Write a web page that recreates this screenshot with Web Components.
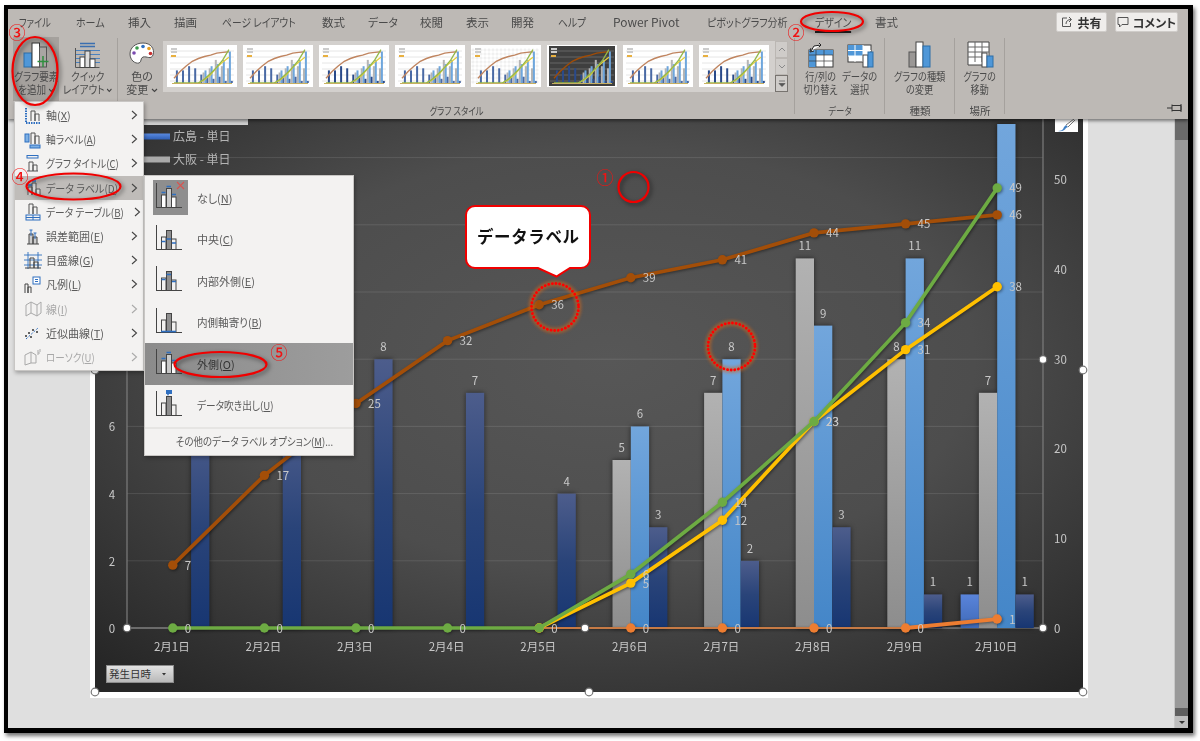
<!DOCTYPE html>
<html lang="ja"><head><meta charset="utf-8"><title>グラフ データラベル</title>
<style>html,body{margin:0;padding:0;background:#fff;overflow:hidden}body{font-family:"Noto Sans CJK JP","Noto Sans",sans-serif}</style>
</head><body>
<app-window>
  <ribbon-bar slot="ribbon">
    <ribbon-tab slot="tabs" style="width:57px;--sx:.8">ファイル</ribbon-tab>
    <ribbon-tab slot="tabs" style="width:52px;--sx:.87">ホーム</ribbon-tab>
    <ribbon-tab slot="tabs" style="width:46px">挿入</ribbon-tab>
    <ribbon-tab slot="tabs" style="width:48px">描画</ribbon-tab>
    <ribbon-tab slot="tabs" style="width:100px;--sx:.85">ページ レイアウト</ribbon-tab>
    <ribbon-tab slot="tabs" style="width:46px">数式</ribbon-tab>
    <ribbon-tab slot="tabs" style="width:52px;--sx:.93">データ</ribbon-tab>
    <ribbon-tab slot="tabs" style="width:46px">校閲</ribbon-tab>
    <ribbon-tab slot="tabs" style="width:45px">表示</ribbon-tab>
    <ribbon-tab slot="tabs" style="width:47px">開発</ribbon-tab>
    <ribbon-tab slot="tabs" style="width:55px;--sx:.85">ヘルプ</ribbon-tab>
    <ribbon-tab slot="tabs" style="width:94px;--sx:1.04">Power Pivot</ribbon-tab>
    <ribbon-tab slot="tabs" style="width:108px;--sx:.87">ピボットグラフ分析</ribbon-tab>
    <ribbon-tab slot="tabs" style="width:60px;--sx:.86" active>デザイン</ribbon-tab>
    <ribbon-tab slot="tabs" style="width:40px">書式</ribbon-tab>
    <share-button slot="actions" kind="share">共有</share-button>
    <share-button slot="actions" kind="comment">コメント</share-button>

    <ribbon-group style="width:110px;padding-left:5px">
      <ribbon-button active style="width:46px;--bx:.87">
        <svg slot="icon" width="26" height="26" viewBox="0 0 26 26"><rect x="1" y="11" width="8" height="14" fill="#4f97d8" stroke="#2d6ea8"/><rect x="9" y="1" width="7.500" height="24" fill="#fff" stroke="#333"/><rect x="16.500" y="5" width="7" height="20" fill="#a9a6a3" stroke="#555"/><path d="M20 14v11M14.500 19.500h11" stroke="#2f8f3f" stroke-width="1.500"/></svg>
        グラフ要素<br>を追加 <chev-mark></chev-mark>
      </ribbon-button>
      <ribbon-button style="width:55px;margin-left:1px;--bx:.87">
        <svg slot="icon" width="27" height="26" viewBox="0 0 27 26"><path d="M6 1.500h15M6 4.500h15" stroke="#3b6fb0" stroke-width="1.500"/><path d="M1 8.500h25M1 12.500h25M1 16.500h25M1 20.500h25" stroke="#4a82c0"/><path d="M1.500 6v19.500h24" fill="none" stroke="#555"/><rect x="6" y="15" width="5" height="10.500" fill="#fff" stroke="#444"/><rect x="11" y="9" width="5" height="16.500" fill="#ddd" stroke="#444"/><rect x="16" y="17" width="5" height="8.500" fill="#fff" stroke="#444"/></svg>
        クイック<br>レイアウト <chev-mark></chev-mark>
      </ribbon-button>
    </ribbon-group>

    <ribbon-group label="グラフ スタイル" style="width:677px;padding-left:6px;--sx:.8">
      <ribbon-button style="width:36px">
        <svg slot="icon" width="26" height="25" viewBox="0 0 26 25"><path d="M14 1C6 1 1 6 1 12c0 6 5 10 9 9 3-1 1-5 4-6 4-1 8 3 10-2 2-6-2-12-10-12z" fill="#fff" stroke="#555"/><circle cx="8" cy="6" r="1.800" fill="#3a9a4a"/><circle cx="14" cy="4.500" r="1.800" fill="#2e6fc0"/><circle cx="20" cy="6.500" r="1.800" fill="#e8a020"/><circle cx="21.500" cy="11.500" r="1.800" fill="#c83030"/><circle cx="5" cy="11" r="1.800" fill="#7a4ab0"/></svg>
        色の<br>変更 <chev-mark></chev-mark>
      </ribbon-button>
      <style-gallery style="margin-left:3px">
        <chart-thumb></chart-thumb><chart-thumb></chart-thumb><chart-thumb pattern="strong"></chart-thumb><chart-thumb></chart-thumb>
        <chart-thumb pattern="dots"></chart-thumb><chart-thumb pattern="dark"></chart-thumb><chart-thumb></chart-thumb><chart-thumb pattern="strong"></chart-thumb>
      </style-gallery>
    </ribbon-group>

    <ribbon-group label="データ" style="width:90px;padding-left:8px;--sx:.8">
      <ribbon-button style="width:36px;--bx:.83">
        <svg slot="icon" width="26" height="26" viewBox="0 0 26 26"><rect x="1" y="8" width="24" height="17" fill="#fff" stroke="#3a3a3a"/><path d="M1 8h24v5H1zM1 13h7v12H1z" fill="#4f97d8"/><path d="M1 13h24M1 19h24M8 8v17M16 8v17" stroke="#3a3a3a" stroke-width=".7"/><path d="M3 9l3-5 7-1M11 1l2 2-2 2M3 6l-1 4 4-1" fill="#fff" stroke="#222"/></svg>
        行/列の<br>切り替え
      </ribbon-button>
      <ribbon-button style="width:38px;margin-left:2px;--bx:.85">
        <svg slot="icon" width="27" height="26" viewBox="0 0 27 26"><rect x="1" y="3" width="23" height="17" fill="#fff" stroke="#3a3a3a"/><path d="M1 3h15v11H1z" fill="#4f97d8"/><path d="M1 8.500h23M1 14h23M8 3v17M16 3v17" stroke="#fff"/><rect x="16" y="13" width="5" height="12" fill="#fff" stroke="#444"/><rect x="21" y="10" width="5" height="15" fill="#4f97d8" stroke="#2d6ea8"/></svg>
        データの<br>選択
      </ribbon-button>
    </ribbon-group>

    <ribbon-group label="種類" style="width:70px">
      <ribbon-button style="width:70px;--bx:.84">
        <svg slot="icon" width="24" height="27" viewBox="0 0 24 27"><rect x="1" y="11" width="7" height="15" fill="#9a9795" stroke="#555"/><rect x="8" y="1" width="7" height="25" fill="#fff" stroke="#444"/><rect x="15" y="5" width="7" height="21" fill="#4f97d8" stroke="#2d6ea8"/></svg>
        グラフの種類<br>の変更
      </ribbon-button>
    </ribbon-group>

    <ribbon-group label="場所" style="width:50px">
      <ribbon-button style="width:50px;--bx:.82">
        <svg slot="icon" width="27" height="27" viewBox="0 0 27 27"><path d="M1 1h21v18l-5 5H1z" fill="#fff" stroke="#444"/><path d="M1 6h21M1 11h21M1 16h21M8 1v20M15 1v20" stroke="#666"/><rect x="15" y="12" width="5" height="14" fill="#fff" stroke="#444"/><rect x="20" y="15" width="6" height="11" fill="#4f97d8" stroke="#2d6ea8"/></svg>
        グラフの<br>移動
      </ribbon-button>
    </ribbon-group>
    <svg slot="pin" width="16" height="10" viewBox="0 0 16 10"><path d="M0 5h5M5 1.500v7M5 2.500h9v5H5" fill="none" stroke="#333"/><path d="M14 1v8" stroke="#333"/></svg>
  </ribbon-bar>

  <work-area slot="work">
    <pivot-chart></pivot-chart>
    <field-button>発生日時</field-button>
  </work-area>

  <fly-menu slot="menus" style="left:14px;top:101px;width:130px">
    <menu-row icon="axis" arrow>軸(<u>X</u>)</menu-row>
    <menu-row icon="axisLabel" arrow style="--sx:.89">軸ラベル(<u>A</u>)</menu-row>
    <menu-row icon="title" arrow style="--sx:.87">グラフ タイトル(<u>C</u>)</menu-row>
    <menu-row icon="dataLabel" arrow on style="--sx:.91">データ ラベル(<u>D</u>)</menu-row>
    <menu-row icon="table" arrow style="--sx:.885">データ テーブル(<u>B</u>)</menu-row>
    <menu-row icon="error" arrow>誤差範囲(<u>E</u>)</menu-row>
    <menu-row icon="grid" arrow>目盛線(<u>G</u>)</menu-row>
    <menu-row icon="legend" arrow>凡例(<u>L</u>)</menu-row>
    <menu-row icon="line" arrow off>線(<u>I</u>)</menu-row>
    <menu-row icon="trend" arrow>近似曲線(<u>T</u>)</menu-row>
    <menu-row icon="stock" arrow off style="--sx:.87">ローソク(<u>U</u>)</menu-row>
  </fly-menu>

  <fly-menu slot="menus" style="left:144px;top:175px;width:210px">
    <label-row kind="none">なし(<u>N</u>)</label-row>
    <label-row kind="center">中央(<u>C</u>)</label-row>
    <label-row kind="inEnd">内部外側(<u>E</u>)</label-row>
    <label-row kind="inBase" style="--sx:.96">内側軸寄り(<u>B</u>)</label-row>
    <label-row kind="outside" on>外側(<u>O</u>)</label-row>
    <label-row kind="callout" style="--sx:.88">データ吹き出し(<u>U</u>)</label-row>
    <more-row>その他のデータ ラベル オプション(<u>M</u>)...</more-row>
  </fly-menu>

  <note-layer slot="menus"></note-layer>
</app-window>

<script>
const FONT='"Noto Sans CJK JP","Noto Sans",sans-serif';
function el(name,css,html){
  class C extends HTMLElement{
    constructor(){super();this.attachShadow({mode:'open'}).innerHTML='<style>'+css+'</style>'+(typeof html==='function'?html(this):html);}
  }
  customElements.define(name,C);
}

el('app-window',`
:host{display:block;position:relative;width:1200px;height:741px;overflow:hidden;font-family:${FONT};font-feature-settings:"palt"}
.wrap{filter:blur(.35px);width:1200px;height:741px}
.frame{box-sizing:border-box;margin:0 0 0 4px;position:relative;top:5px;width:1189px;height:728px;border:solid #000;border-width:4px 5px 5px 4px;display:flex;flex-direction:column;background:#dfdfdf;box-shadow:2px 3px 4px rgba(0,0,0,.55);overflow:hidden}
`,`<div class="wrap"><div class="frame"><slot name="ribbon"></slot><slot name="work"></slot></div><slot name="menus"></slot></div>`);

el('ribbon-bar',`
:host{display:block;position:relative;z-index:3;background:#bdb9b5;height:110px;flex:none;box-shadow:0 2px 3px rgba(0,0,0,.45);color:#4b4b4b;font-size:11px}
.top{display:flex;height:27px;align-items:center;padding-left:11px}
.tabs{display:flex;flex:1}
.acts{display:flex;gap:8px;margin-right:10px;margin-top:-1px}
.groups{display:flex;height:83px}
.pin{position:absolute;right:5px;bottom:3px}
`,`<div class="top"><div class="tabs"><slot name="tabs"></slot></div><div class="acts"><slot name="actions"></slot></div></div>
<div class="groups"><slot></slot></div><div class="pin"><slot name="pin"></slot></div>`);

el('ribbon-tab',`
:host{display:block;flex:none;position:relative;font-size:11.5px;line-height:27px;height:27px;white-space:nowrap;color:#4a4a4a}
span{display:inline-block;transform:scaleX(var(--sx,1));transform-origin:left center}
:host([active]) span{border-bottom:2px solid #222;height:22px}
`,`<span><slot></slot></span>`);

el('share-button',`
:host{display:flex;align-items:center;justify-content:center;gap:4px;box-sizing:border-box;height:20px;background:#efedeb;border:1px solid #cfccc9;border-radius:2px;font-size:12px;font-weight:700;color:#333;white-space:nowrap}
:host([kind=share]){width:51px}:host([kind=comment]){width:63px}
`,h=>(h.getAttribute('kind')==='share'
?`<svg width="12" height="12" viewBox="0 0 12 12"><path d="M6 2H1.500v8.500h8V7M5 8c0-3 2-4.500 5-4.500M8 1l2.500 2.500L8 6" fill="none" stroke="#555"/></svg>`
:`<svg width="12" height="12" viewBox="0 0 12 12"><path d="M1 1.500h10v7H5l-2.500 2.500V8.500H1z" fill="none" stroke="#555"/></svg>`)+`<slot></slot>`);

el('ribbon-group',`
:host{display:flex;flex:none;box-sizing:border-box;position:relative;height:81px;margin-top:0;padding-top:1px}
:host::after{content:"";position:absolute;right:0;top:2px;bottom:3px;width:1px;background:#a5a19d}
.lab{position:absolute;left:0;right:0;bottom:-1px;text-align:center;font-size:10.500px;line-height:14px;color:#4b4b4b;transform:scaleX(var(--sx,1))}
`,h=>`<slot></slot><div class="lab">${h.getAttribute('label')||''}</div>`);

el('ribbon-button',`
:host{display:flex;flex:none;flex-direction:column;align-items:center;box-sizing:border-box;height:64px;font-size:11px;line-height:13px;text-align:center;color:#4b4b4b;white-space:nowrap}
:host([active]){background:#a5a19d}
.ic{height:33px;display:flex;align-items:center;justify-content:center;padding-top:2px;box-sizing:border-box}
.lb{transform:scaleX(var(--bx,1))}
`,`<div class="ic"><slot name="icon"></slot></div><div class="lb"><slot></slot></div>`);

el('chev-mark',`:host{display:inline-block;width:7px;height:5px;vertical-align:1px}`,`<svg width="7" height="5" viewBox="0 0 7 5" style="display:block"><path d="M1 1l2.500 2.500L6 1" fill="none" stroke="#444" stroke-width="1.100"/></svg>`);

el('style-gallery',`
:host{display:flex;align-self:flex-start;margin-top:4px;width:624px;height:51px;background:#d3d0cd;box-sizing:border-box;padding:4px 0 0 4px;gap:6px}
.thumbs{display:flex;gap:6px;flex:1}
.sc{display:flex;flex-direction:column;width:13px;margin:-4px 0 0 0;flex:none}
.sc div{flex:1;border:1px solid #bbb7b3;background:#cfccc9;display:flex;align-items:center;justify-content:center}
.sc div:last-child{border-color:#77736f}
`,`<div class="thumbs"><slot></slot></div><div class="sc"><div><svg width="8" height="5"><path d="M1 4l3-3 3 3" fill="none" stroke="#8a8a8a"/></svg></div><div><svg width="8" height="5"><path d="M1 1l3 3 3-3" fill="none" stroke="#8a8a8a"/></svg></div><div><svg width="8" height="7"><path d="M1 1h6M1 3.500h6l-3 3z" fill="#555" stroke="#555" stroke-width=".7"/></svg></div></div>`);

el('chart-thumb',`:host{display:block;width:70px;height:42px;flex:none}svg{display:block}`,h=>{
  const p=h.getAttribute('pattern')||'';const dark=p==='dark';
  const X=i=>7+i*6.1,Y=v=>38-v*.68,D=[6,6,8,7,4,3,2,3,1,1],G=[0,0,0,0,0,5,7,11,8,7],L=[0,0,0,0,0,6,8,9,11,15];
  const sc=2.1;let s='';
  for(let i=0;i<10;i++){
    if(G[i])s+=`<rect x="${X(i)-1.9}" y="${38-G[i]*sc}" width="2" height="${G[i]*sc}" fill="#b5b5b5"/>`;
    if(L[i])s+=`<rect x="${X(i)}" y="${38-L[i]*sc}" width="2" height="${L[i]*sc}" fill="#6ea6dc"/>`;
    s+=`<rect x="${X(i)+1.9}" y="${38-D[i]*sc}" width="2" height="${D[i]*sc}" fill="${p==='strong'||dark?'#2a4a8a':'#4a6aa5'}"/>`;
  }
  const pl=(a,c,w)=>`<polyline fill="none" stroke="${c}" stroke-width="${w}" points="${a.map(q=>X(q[0])+','+Y(q[1])).join(' ')}"/>`;
  const br=[7,17,25,32,36,39,41,44,45,46].map((v,i)=>[i,v]);
  const gr=[0,0,0,0,0,6,14,23,34,49].map((v,i)=>[i,v]);
  const ye=[0,5,12,23,31,38].map((v,i)=>[i+4,v]);
  let bg='';
  if(p==='dots'){for(let y=5;y<38;y+=4)for(let x=2;x<70;x+=4)bg+=`<circle cx="${x}" cy="${y}" r="1.100" fill="none" stroke="#d5d5d5" stroke-width=".4"/>`;}
  else{for(let y=6;y<38;y+=6)bg+=`<path d="M3 ${y}h64" stroke="${dark?'#666':'#e6e6e6'}"/>`;}
  return `<svg width="70" height="42" viewBox="0 0 70 42"><rect width="70" height="42" fill="#fff"/>${dark?'<rect x="2" y="1" width="66" height="40" fill="#3f3f3f"/>':''}${bg}
  <rect x="4" y="3" width="6" height="2" fill="#ccc"/><rect x="4" y="6" width="6" height="2" fill="#ccc"/><rect x="4" y="10" width="5" height="2" fill="#e8b040"/>
  ${s}${pl(br,dark?'#a04c06':'#c08560',1.400)}${pl(ye,'#e5cf3a',1.300)}${pl(gr,'#94b84a',1.300)}<path d="M5 38.500h60" stroke="#c8b060"/></svg>`;
});

el('work-area',`
:host{display:flex;flex:1;position:relative;min-height:0}
.main{flex:1;min-width:0;padding-left:82px;position:relative}
.card{position:relative;box-sizing:border-box;width:998px;height:579px;background:#fff;padding:0 5px 6px 5px}
.sb{width:14px;flex:none;display:flex;flex-direction:column;background:#6a6a6a;border-left:1px solid #c8c8c8;box-sizing:border-box}
.sb .t{height:21px}.sb .th{flex:1;background:#999}.sb .g{height:8px;background:#5f5f5f}
.sb .b{height:12px;background:#bdbdbd;display:flex;align-items:center;justify-content:center}
`,`<div class="main"><div class="card"><slot></slot></div></div><div class="sb"><div class="t"></div><div class="th"></div><div class="g"></div><div class="b"><svg width="8" height="5"><path d="M1 1h6L4 4z" fill="#333"/></svg></div></div>`);

el('field-button',`
:host{position:absolute;left:16px;top:546px;box-sizing:border-box;width:68px;height:18px;background:linear-gradient(#e2e2e2,#b9b9b9);border:1px solid #8c8c8c;font-size:10.500px;line-height:16px;color:#333;padding-left:2px;display:flex;justify-content:space-between;align-items:center}
svg{margin-right:6px}
`,`<span><slot></slot></span><svg width="6" height="4"><path d="M1 1h4L3 3.500z" fill="#333"/></svg>`);

el('pivot-chart',`
:host{display:block;width:988px;height:573px}
svg{display:block;overflow:visible}
text{font-family:${FONT};font-size:11.500px;fill:#c8c8c8}
`,()=>{
  const cx=i=>172.8+91.6*i,yL=v=>628-33.6*v,yR=v=>628-8.98*v,W=18.3;
  const cat=['2月1日','2月2日','2月3日','2月4日','2月5日','2月6日','2月7日','2月8日','2月9日','2月10日'];
  let o='';
  o+=`<defs>
  <radialGradient id="bg" cx=".52" cy=".42" r=".74"><stop offset="0" stop-color="#575757"/><stop offset=".5" stop-color="#4d4d4d"/><stop offset="1" stop-color="#262626"/></radialGradient>
  <linearGradient id="gD" x1="0" y1="0" x2="0" y2="1"><stop offset="0" stop-color="#4d5d8c"/><stop offset=".5" stop-color="#2a4479"/><stop offset="1" stop-color="#173672"/></linearGradient>
  <linearGradient id="gL" x1="0" y1="0" x2="0" y2="1"><stop offset="0" stop-color="#72a6dc"/><stop offset="1" stop-color="#4486c8"/></linearGradient>
  <linearGradient id="gG" x1="0" y1="0" x2="0" y2="1"><stop offset="0" stop-color="#b2b2b2"/><stop offset="1" stop-color="#8d8d8d"/></linearGradient>
  <linearGradient id="gB" x1="0" y1="0" x2="0" y2="1"><stop offset="0" stop-color="#5a84da"/><stop offset="1" stop-color="#3f6ab8"/></linearGradient>
  <linearGradient id="lgB" x1="0" y1="0" x2="0" y2="1"><stop offset="0" stop-color="#5a8ae0"/><stop offset="1" stop-color="#2f5fb5"/></linearGradient>
  </defs><g transform="translate(-95,-119)">`;
  o+=`<rect x="95" y="119" width="988" height="573" fill="url(#bg)"/>`;
  for(let k=1;k<=7;k++)o+=`<path d="M127 ${yL(k*2)}H1043" stroke="#fff" stroke-opacity=".11"/>`;
  o+=`<path d="M127 119V628M1043 119V628" stroke="#7c7c7c" stroke-width="1.200"/><path d="M127 628H1043" stroke="#808080" stroke-width="1.500"/>`;
  const ser=[[[0,0,0,0,0,0,0,0,0,1],-2,'gB'],[[0,0,0,0,0,5,7,11,8,7],-1,'gG'],[[0,0,0,0,0,6,8,9,11,15],0,'gL'],[[6,6,8,7,4,3,2,3,1,1],1,'gD']];
  let bars='',lab='';
  ser.forEach(([d,n,g])=>d.forEach((v,i)=>{if(!v)return;const x=cx(i)+n*W,t=yL(v);
    bars+=`<rect x="${x}" y="${t}" width="${W}" height="${628-t}" fill="url(#${g})"/>`;
    if(v<14&&!(g==='gD'&&i<2))lab+=`<text x="${x+W/2}" y="${t-8}" text-anchor="middle">${v}</text>`;}));
  o+=`<g style="filter:drop-shadow(0 0 2.500px rgba(0,0,0,.55))">${bars}</g>`;
  const pts=(a,s=0)=>a.map((v,i)=>cx(i+s)+','+yR(v)).join(' ');
  const line=(a,c,s,w)=>{let m='';a.forEach((v,i)=>{m+=`<circle cx="${cx(i+s)}" cy="${yR(v)}" r="4.700" fill="${c}"/>`;});return `<polyline points="${pts(a,s)}" fill="none" stroke="${c}" stroke-width="${w}"/>`+m;};
  const lineLab=(a,s)=>a.forEach((v,i)=>{lab+=`<text x="${cx(i+s)+12}" y="${yR(v)+4.500}">${v}</text>`;});
  const brown=[7,17,25,32,36,39,41,44,45,46],green=[0,0,0,0,0,6,14,23,34,49],yellow=[0,5,12,23,31,38],orange=[0,0,0,0,0,1];
  o+=`<g style="filter:drop-shadow(1px 1px 1.500px rgba(0,0,0,.45))">`+line(orange,'#ed7d31',4,2.500).replace(/<polyline[^>]*>/,`<polyline points="${pts(orange.slice(0,5),4)}" fill="none" stroke="#c67a45" stroke-width="2.200"/><polyline points="${pts([0,1],8)}" fill="none" stroke="#ed7d31" stroke-width="3.800"/>`)
     +line(brown,'#a34e08',0,3.700)+line(yellow,'#ffc000',4,3.700)+line(green,'#6dab43',0,3.700)+`</g>`;
  lineLab(brown,0);lineLab(green,0);lineLab(yellow.slice(1),5);lineLab(orange.slice(1),5);
  o+=lab;
  cat.forEach((c,i)=>{o+=`<text x="${cx(i)-1}" y="651" text-anchor="middle">${c}</text>`;});
  [[0,628],[2,561],[4,493.500],[6,426]].forEach(([v,y])=>{o+=`<text x="112" y="${y+5}" text-anchor="middle">${v}</text>`;});
  [0,10,20,30,40,50].forEach(v=>{o+=`<text x="1054" y="${yR(v)+5}">${v}</text>`;});
  o+=`<rect x="144" y="133.500" width="26" height="6" fill="url(#lgB)"/><rect x="144" y="156.500" width="26" height="6" fill="#aaa"/>`;
  o+=`<text x="173" y="141" style="font-size:12px;fill:#b4b4b4">広島 - 単日</text><text x="173" y="164" style="font-size:12px;fill:#b4b4b4">大阪 - 単日</text>`;
  o+=`<rect x="144" y="119" width="104" height="6" fill="#cfcfcf"/>`;
  o+=`<rect x="1055" y="119" width="23" height="13" fill="#fff"/><path d="M1058 131c3 0 5-1 6-4l2-2 2 2-2 1c-1 2-4 4-8 3z" fill="#3f7fc4"/><path d="M1066 125l8-6M1068 127l7-7" stroke="#777"/>`;
  [[127,628],[585,628],[1043,628],[1043,359.500]].forEach(([x,y])=>{o+=`<circle cx="${x}" cy="${y}" r="3.800" fill="#fff" stroke="#666" stroke-width="1.200"/>`;});
  [[95,692],[589,692],[1083,692],[1083,370],[95,370]].forEach(([x,y])=>{o+=`<circle cx="${x}" cy="${y}" r="3.800" fill="#fff" stroke="#777" stroke-width="1.200"/>`;});
  return `<svg width="988" height="573" viewBox="0 0 988 573">${o}</g></svg>`;
});

el('fly-menu',`
:host{position:absolute;display:block;z-index:5;box-sizing:border-box;background:#f3f2f1;border:1px solid #c8c6c4;box-shadow:1px 2px 4px rgba(0,0,0,.3);padding:1px 0}
`,`<slot></slot>`);

const mi={
 axis:'<path d="M3 2v15M3 17h15" stroke="#2f6fc0" stroke-width="2" stroke-dasharray="1.500 1"/><path d="M8 15V5h4v10M12 15V8h4v7" fill="none" stroke="#555"/>',
 axisLabel:'<rect x="2" y="4" width="4" height="8" fill="#7db0e4" stroke="#2f6fc0"/><rect x="7" y="15" width="10" height="3" fill="#7db0e4" stroke="#2f6fc0"/><path d="M8 14V3h4v11M12 14V6h4v8" fill="none" stroke="#555"/>',
 title:'<rect x="4" y="1.500" width="11" height="2.500" fill="none" stroke="#2f6fc0"/><path d="M6 17V8h4v9M10 17v-6h4v6M4 17h11" fill="none" stroke="#555"/>',
 dataLabel:'<path d="M5 17V9h4v8M9 17V5h4v12M13 17v-6h4v6" fill="#ddd" stroke="#555"/><path d="M5 7h4M9 3h4" stroke="#2f6fc0" stroke-width="1.500"/>',
 table:'<path d="M6 12V2h4v10M10 12V5h4v7" fill="none" stroke="#555"/><rect x="3" y="13" width="14" height="5" fill="none" stroke="#2f6fc0"/><path d="M3 15.500h14M10 13v5" stroke="#2f6fc0"/>',
 error:'<path d="M6 17V7h4v10M10 17V10h4v7M4 17h12" fill="#ccc" stroke="#444"/><path d="M8 3v6M12 6v6M6.500 3h3M10.500 6h3" stroke="#2f6fc0"/>',
 grid:'<path d="M1 4h18M1 9h18M1 14h18M5 1v17M15 1v17" stroke="#2f6fc0" stroke-width=".9"/><path d="M7 17V7h4v10M11 17V11h4v6M2 17h16" fill="none" stroke="#444"/>',
 legend:'<path d="M2 18v-9h3v9M5 18v-6h3v6" fill="none" stroke="#444"/><rect x="10" y="2" width="7" height="7" fill="#fff" stroke="#2f6fc0"/><path d="M12 4.500h3M12 6.500h3" stroke="#2f6fc0"/>',
 line:'<path d="M3 6v11l5-3 6 3 4-3V3l-4 3-6-3zM8 3v11M14 6v11" fill="none" stroke="#a9a9a9"/>',
 trend:'<path d="M3 16l12-11" stroke="#2f6fc0" stroke-dasharray="2 1.500"/><circle cx="3" cy="13" r="1" fill="#333"/><circle cx="8" cy="14" r="1" fill="#333"/><circle cx="10" cy="7" r="1" fill="#333"/><circle cx="14" cy="9" r="1" fill="#333"/><circle cx="6" cy="10" r="1" fill="#333"/>',
 stock:'<path d="M2 8v10l6-2V5zM8 5l5 3v8l-5 0" fill="none" stroke="#a9a9a9"/><path d="M15 3v5M15 6h2M17 2v3" stroke="#a9a9a9"/>'
};
el('menu-row',`
:host{display:flex;align-items:center;height:24.200px;font-size:11px;color:#5a5a5a;white-space:nowrap;position:relative;box-sizing:border-box}
:host([on]){background:#bfbcb9}
:host([off]){color:#a8a8a8}
svg.i{margin:0 0 0 8px;flex:none}
.t{margin-left:4px;flex:1;display:block;transform:scaleX(var(--sx,1));transform-origin:left center}
svg.a{margin-right:5px;flex:none}
`,h=>`<svg class="i" width="19" height="19" viewBox="0 0 19 19">${mi[h.getAttribute('icon')]}</svg><span class="t"><slot></slot></span><svg class="a" width="7" height="10" viewBox="0 0 7 10"><path d="M1 1l4.500 4L1 9" fill="none" stroke="${h.hasAttribute('off')?'#aaa':'#444'}" stroke-width="1.100"/></svg>`);

el('label-row',`
:host{display:flex;align-items:center;height:41.500px;font-size:11px;color:#5a5a5a;white-space:nowrap;box-sizing:border-box;padding-left:8px}
:host([on]){background:linear-gradient(90deg,#8b8b8b,#9d9d9d);color:#333}
.box{width:35px;height:35px;flex:none;display:flex}
:host([kind=none]) .box{background:#8e8e8e}
.t{margin-left:9px;transform:scaleX(var(--sx,1));transform-origin:left center}
`,h=>{
  const k=h.getAttribute('kind');
  const fill=(k==='none'||k==='outside')?['#fff','#c9c9c9','#fff']:['#f3f2f1','#8f8f8f','#f3f2f1'];
  const dash={center:'M8.500 19.500h4M13.500 17h4.500M19 21h4',inEnd:'M8.500 16.500h4M13.500 11.500h4.500M19 18.500h4',inBase:'M8 26.500h15',outside:'M8.500 12.500h4M13.500 6.500h4.500M19 14.500h4',none:'M8.500 12.500h4M13.500 6.500h4.500M19 14.500h4'}[k];
  let sv=`<path d="M3.500 3v25M3.500 27.500H29" stroke="#444" fill="none"/>
  <rect x="8.500" y="15" width="4.500" height="12.500" fill="${fill[0]}" stroke="#444"/><rect x="13.500" y="8.500" width="5" height="19" fill="${fill[1]}" stroke="#444"/><rect x="18.500" y="17" width="4.500" height="10.500" fill="${fill[2]}" stroke="#444"/>`;
  if(dash)sv+=`<path d="${dash}" stroke="#2f6fc0" stroke-width="1.600" fill="none"/>`;
  if(k==='callout')sv+=`<path d="M13 2h6v4h-3l-1 2-1-2h-1z" fill="#2f6fc0"/>`;
  if(k==='none')sv+=`<path d="M24 2l7 7M31 2l-7 7" stroke="#d9534f" stroke-width="1.100"/>`;
  return `<div class="box"><svg width="35" height="35" viewBox="0 0 35 35">${sv}</svg></div><span class="t"><slot></slot></span>`;
});

el('more-row',`
:host{display:block;height:27px;margin-top:1px;border-top:2px solid #e6e5e3;box-sizing:border-box;font-size:11px;line-height:24px;color:#5a5a5a;text-align:center;white-space:nowrap;padding-left:11px}
div{transform:scaleX(.86)}
`,`<div><slot></slot></div>`);

el('note-layer',`
:host{position:absolute;left:0;top:0;width:1200px;height:741px;z-index:9;display:block;pointer-events:none}
svg{display:block;overflow:visible}
text{font-family:${FONT}}
.n{font-size:17px;font-weight:500;fill:#f01414;text-anchor:middle}
.e{fill:none;stroke:#f00000;stroke-width:2.200;filter:drop-shadow(2px 2px 2px rgba(0,0,0,.5))}
.g{fill:none;stroke:#d2661c;stroke-width:6;opacity:.55;filter:blur(1.800px)}
.d{fill:none;stroke:#ff0000;stroke-width:2.800;stroke-linecap:round;stroke-dasharray:.1 3.600}
`,`<svg width="1200" height="741" viewBox="0 0 1200 741">
<ellipse class="e" cx="35" cy="71" rx="22.500" ry="34"/>
<ellipse class="e" cx="73.500" cy="186.500" rx="47" ry="13"/>
<ellipse class="e" cx="220.500" cy="364.500" rx="46" ry="12.500"/>
<ellipse class="e" cx="832" cy="21.500" rx="31" ry="9.500"/>
<circle class="e" cx="633.500" cy="187" r="15"/>
<circle class="g" cx="555" cy="307" r="23.500"/><circle class="d" cx="555" cy="307" r="23.500"/>
<circle class="g" cx="731.500" cy="346.500" r="23.500"/><circle class="d" cx="731.500" cy="346.500" r="23.500"/>
<text class="n" x="17" y="39">③</text><text class="n" x="20" y="183">④</text><text class="n" x="279" y="359">⑤</text><text class="n" x="605" y="184">①</text><text class="n" x="796" y="39">②</text>
<path d="M475 206H581a9 9 0 0 1 9 9V259a9 9 0 0 1-9 9H570L556.500 276.500 538 268H475a9 9 0 0 1-9-9V215a9 9 0 0 1 9-9z" fill="#fff" stroke="#f00000" stroke-width="2"/>
<text x="477" y="243" style="font-size:16.500px;font-weight:700;letter-spacing:.6px;font-feature-settings:'palt' 0" fill="#111">データラベル</text>
</svg>`);
</script>
</body></html>
